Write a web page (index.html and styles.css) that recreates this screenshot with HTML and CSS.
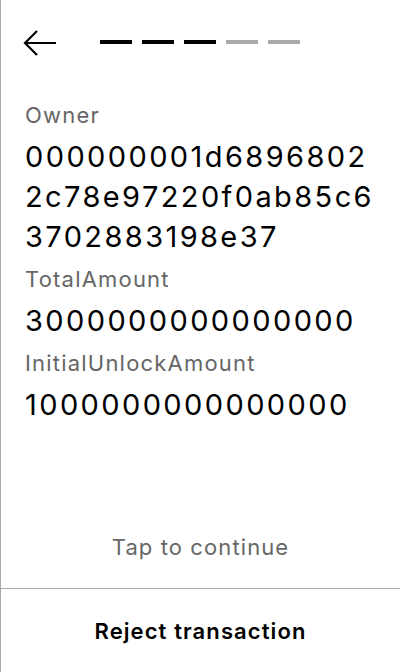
FILE: index.html
```html
<!DOCTYPE html>
<html>
<head>
<meta charset="utf-8">
<link rel="stylesheet" href="styles.css">
</head>
<body>
<div class="screen">
  <header class="header">
    <svg class="back" width="36" height="30" viewBox="22 28 36 30">
      <path d="M56 43H25M37 31L25 43L37 55" fill="none" stroke="#000" stroke-width="2.2"/>
    </svg>
    <div class="steps">
      <span class="step on"></span>
      <span class="step on"></span>
      <span class="step on"></span>
      <span class="step"></span>
      <span class="step"></span>
    </div>
  </header>
  <main class="fields">
    <div class="label">Owner</div>
    <div class="value">000000001d6896802<br>2c78e97220f0ab85c6<br>3702883198e37</div>
    <div class="label">TotalAmount</div>
    <div class="value">3000000000000000</div>
    <div class="label">InitialUnlockAmount</div>
    <div class="value">1000000000000000</div>
  </main>
  <div class="tap">Tap to continue</div>
  <div class="reject">Reject transaction</div>
</div>
</body>
</html>
```
FILE: styles.css
```css
html, body {
  margin: 0;
  padding: 0;
  background: #fff;
}
.screen {
  width: 400px;
  height: 672px;
  box-sizing: border-box;
  border-left: 1px solid #aaa;
  display: flex;
  flex-direction: column;
  font-family: Inter, "Noto Sans", sans-serif;
  color: #000;
}
.header {
  height: 86px;
  box-sizing: border-box;
  display: flex;
  align-items: flex-start;
  padding: 28px 0 0 21px;
  flex-shrink: 0;
}
.back {
  display: block;
}
.steps {
  display: flex;
  gap: 10px;
  margin: 12px 0 0 42px;
}
.step {
  width: 32px;
  height: 4px;
  background: #aaa;
}
.step.on {
  background: #000;
}
.fields {
  flex: 1;
  padding: 7px 0 0 24px;
}
.label {
  font-size: 22px;
  line-height: 44px;
  letter-spacing: 1.2px;
  color: #666;
}
.value {
  font-size: 29px;
  line-height: 40px;
  letter-spacing: 2.4px;
  white-space: nowrap;
}
.tap {
  text-align: center;
  font-size: 22px;
  line-height: 26px;
  letter-spacing: 1.1px;
  color: #666;
  padding-bottom: 28px;
  border-bottom: 1px solid #aaa;
}
.reject {
  height: 83px;
  flex-shrink: 0;
  display: flex;
  align-items: center;
  justify-content: center;
  font-size: 22px;
  font-weight: 600;
  letter-spacing: 1.1px;
}
```
